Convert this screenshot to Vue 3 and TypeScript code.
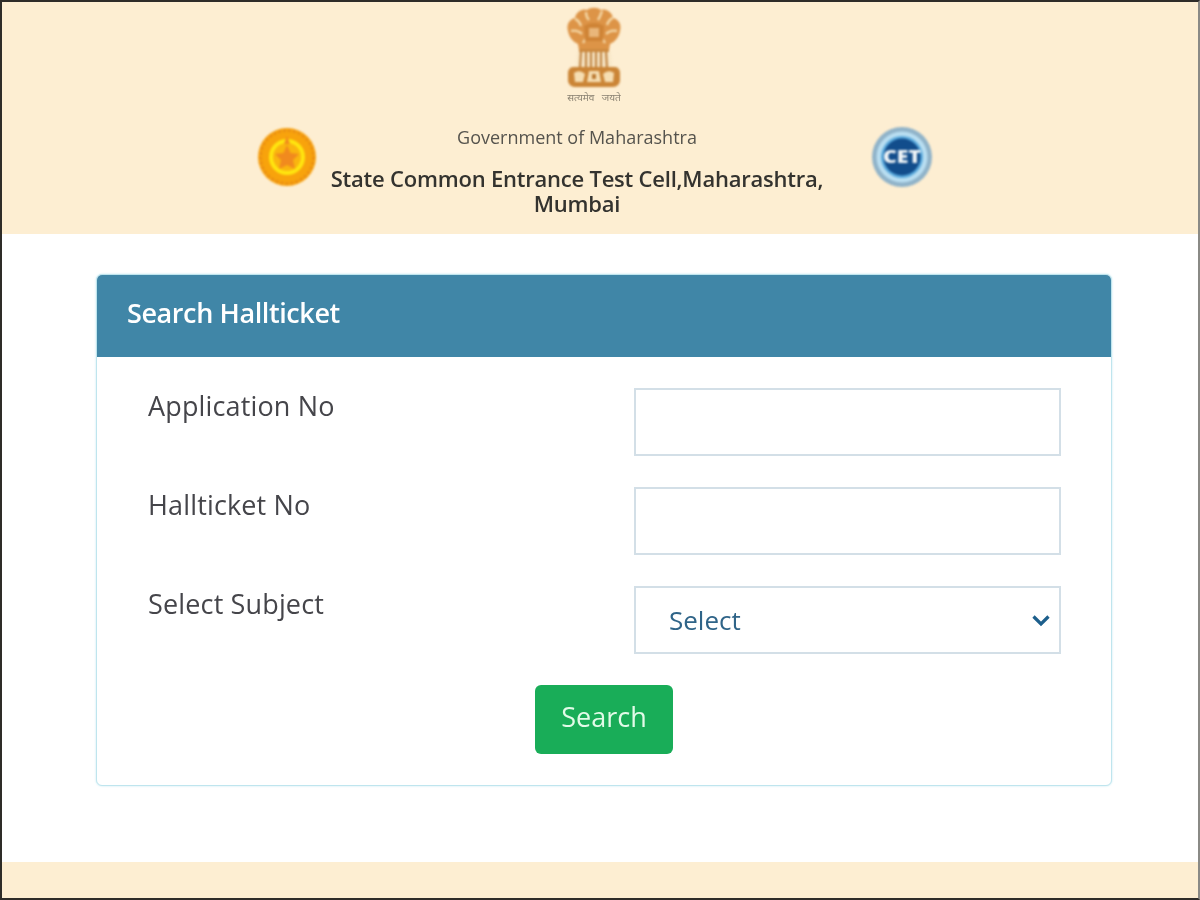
<template>
  <div class="page">
    <header class="top">
      <div class="emblem-wrap">
        <svg class="emblem" width="56" height="84" viewBox="0 0 56 84">
          <!-- lions -->
          <path d="M2 24c-2-7 2-12 7-13 1-6 7-10 12-8 4-3 10-3 14 0 5-2 11 2 12 8 5 1 9 6 7 13-1 6-5 11-10 13l-1 6H13l-1-6C7 35 3 30 2 24z" fill="#dd9447" />
          <path d="M9 12c3 1 5 4 6 7M20 5c0 3 1 6 3 8M36 4c-1 3-2 6-4 9M47 11c-3 1-5 4-6 7M5 24c4-1 8 0 11 3M51 24c-4-1-8 0-11 3M17 36c1-2 2-4 4-5M39 36c-1-2-2-4-4-5" stroke="#f4d6a4" stroke-width="2.4" fill="none" />
          <path d="M18 19c6-4 14-4 20 0l-1 15H19z" fill="#cf8436" />
          <path d="M23 21h10v9H23z" fill="#e9b67a" />
          <!-- column body -->
          <path d="M13 42h30v3H13z" fill="#cc8a3f" />
          <path d="M11 45h34l1 16H10z" fill="#f8e8c9" />
          <path d="M15 45l-1 16M20 45v16M25 45v16M30 45v16M35 45v16M40 45l1 16" stroke="#c08340" stroke-width="2.200" />
          <!-- base -->
          <path d="M7 60h42c3 0 5 3 5 6v7c0 4-3 7-7 7H9c-4 0-7-3-7-7v-7c0-3 2-6 5-6z" fill="#cb8536" />
          <path d="M8 66c4-3 8-2 11 1l-2 8H9zM23 64h10l2 11H21zM37 67c3-3 7-4 11-1l-1 9h-8z" fill="#f6deb2" />
          <path d="M26 67h4v5h-4z" fill="#bb7a32" />
        </svg>
        <span class="motto">सत्यमेव जयते</span>
      </div>
      <div class="brand">
        <svg class="seal" width="60" height="60" viewBox="0 0 60 60">
          <circle cx="30" cy="30" r="29" fill="#f8a30c" />
          <circle cx="30" cy="30" r="26.500" fill="none" stroke="#ea8f14" stroke-width="3" stroke-dasharray="3 2" />
          <circle cx="30" cy="30" r="18" fill="#ffe60f" />
          <circle cx="30" cy="30" r="14" fill="#fab50f" />
          <path d="M30 9l3 8h-6zM30 18l3.500 8 8.500 1-6 6 2 9-8-4-8 4 2-9-6-6 8.500-1z" fill="#f18a1e" />
        </svg>
        <div class="names">
          <div class="gov">Government of Maharashtra</div>
          <div class="cell">State Common Entrance Test Cell,Maharashtra,<br />Mumbai</div>
        </div>
        <svg class="cet" width="62" height="62" viewBox="0 0 62 62">
          <circle cx="31" cy="31" r="30" fill="#90b3c9" />
          <circle cx="31" cy="31" r="25.500" fill="#b9def1" />
          <circle cx="31" cy="31" r="21" fill="#5aa9dc" />
          <circle cx="31" cy="31" r="18.500" fill="#124d8c" />
          <text x="31" y="36.500" text-anchor="middle" textLength="38" lengthAdjust="spacingAndGlyphs" class="cet-text">CET</text>
        </svg>
      </div>
    </header>

    <main class="content">
      <section class="card">
        <h2 class="card-head">Search Hallticket</h2>
        <form class="card-body" @submit.prevent>
          <div v-for="row in rows" :key="row.id" class="row">
            <label class="label" :for="row.id">{{ row.label }}</label>
            <input v-if="row.type === 'text'" :id="row.id" class="field" type="text" />
            <div v-else class="select-wrap">
              <select :id="row.id" class="field select">
                <option>Select</option>
              </select>
              <svg class="chev" width="20" height="13" viewBox="0 0 20 13">
                <path d="M2.500 2.500L10 10l7.500-7.500" fill="none" stroke="#1d5f8c" stroke-width="3.200" />
              </svg>
            </div>
          </div>
          <div class="actions">
            <button class="btn" type="submit">Search</button>
          </div>
        </form>
      </section>
    </main>

    <footer class="bottom"></footer>
  </div>
</template>

<script setup lang="ts">
const rows = [
  { id: 'appno', label: 'Application No', type: 'text' },
  { id: 'hallno', label: 'Hallticket No', type: 'text' },
  { id: 'subject', label: 'Select Subject', type: 'select' },
];
</script>

<style>
html,
body {
  background: #fff;
}
</style>

<style scoped>
.page {
  box-sizing: border-box;
  width: 1200px;
  height: 900px;
  display: flex;
  flex-direction: column;
  border: 2px solid #2e2c28;
  border-right-color: #8a8a86;
  font-family: "Open Sans", "Noto Sans", sans-serif;
  background: #fff;
  overflow: hidden;
  filter: blur(0.35px);
}

.top {
  height: 232px;
  flex: none;
  background: #fdeed2;
  display: flex;
  flex-direction: column;
  align-items: center;
}

.emblem-wrap {
  display: flex;
  flex-direction: column;
  align-items: center;
  margin: 5px 0 0 -12px;
}

.emblem {
  filter: blur(1px);
}

.motto {
  font-size: 10px;
  line-height: 12px;
  word-spacing: 5px;
  color: #8a8272;
  font-family: "Noto Sans", "DejaVu Sans", sans-serif;
  filter: blur(0.5px);
}

.brand {
  display: flex;
  align-items: flex-start;
  margin: 21px 0 0 -11px;
}

.seal {
  margin-top: 3px;
  filter: blur(1px);
}

.names {
  width: 521px;
  margin-right: 33px;
  text-align: center;
}

.gov {
  font-size: 18px;
  line-height: 26px;
  color: #55534d;
}

.cell {
  margin-top: 16px;
  font-size: 22px;
  line-height: 25px;
  font-weight: 600;
  color: #34332f;
  letter-spacing: -0.22px;
}

.cet {
  margin-top: 2px;
  filter: blur(0.8px);
}

.cet-text {
  font-family: "Open Sans", sans-serif;
  font-size: 17px;
  font-weight: 800;
  fill: #f2f6f8;
}

.content {
  flex: 1;
  padding: 40px 86px 0 94px;
}

.card {
  height: 512px;
  box-sizing: border-box;
  border: 1px solid #bfe5ee;
  border-radius: 6px;
  overflow: hidden;
  background: #fff;
  box-shadow: 0 0 2px rgba(170, 225, 238, 0.8);
}

.card-head {
  margin: 0;
  height: 82px;
  padding: 0 30px 8px;
  box-sizing: border-box;
  display: flex;
  align-items: center;
  background: #4086a7;
  color: #fff;
  font-size: 27px;
  font-weight: 600;
  letter-spacing: -0.4px;
}

.card-body {
  padding: 31px 50px 0 51px;
  display: flex;
  flex-direction: column;
  gap: 31px;
}

.row {
  display: grid;
  grid-template-columns: 486px 427px;
  height: 68px;
}

.label {
  font-size: 27px;
  line-height: 36px;
  letter-spacing: 0.15px;
  color: #45454a;
}

.field {
  box-sizing: border-box;
  width: 100%;
  height: 68px;
  border: 2px solid #d3dfe7;
  background: #fff;
  outline: none;
  font-family: inherit;
}

.select-wrap {
  position: relative;
}

.select {
  appearance: none;
  padding-left: 33px;
  font-size: 26px;
  color: #2f6488;
  border-radius: 0;
}

.chev {
  position: absolute;
  right: 10px;
  top: 28px;
  pointer-events: none;
}

.actions {
  display: flex;
  justify-content: center;
  padding-right: 1px;
}

.btn {
  width: 138px;
  height: 69px;
  border: none;
  border-radius: 6px;
  background: #19ad58;
  color: #e2fbe8;
  font-family: inherit;
  font-size: 27px;
  padding: 0 0 6px;
}

.bottom {
  height: 36px;
  flex: none;
  margin-top: auto;
  background: #fdeed2;
}
</style>
